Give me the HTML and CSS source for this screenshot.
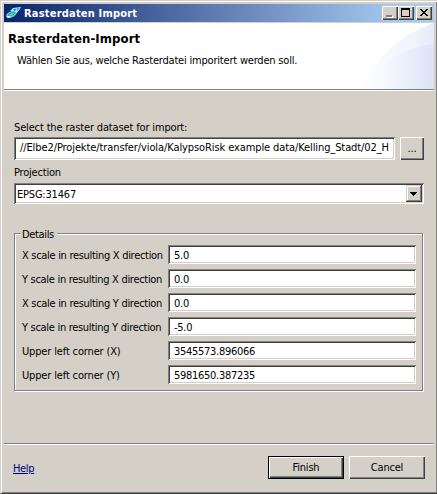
FILE: index.html
```
<!DOCTYPE html>
<html lang="de">
<head>
<meta charset="utf-8">
<title>Rasterdaten Import</title>
<link rel="stylesheet" href="styles.css">
</head>
<body>
<div class="window">
  <div class="titlebar">
    <svg class="app-icon" width="16" height="16" viewBox="0 0 16 16">
      <path d="M4 6L7 3L15 2L14 4L10 9L8 7Z" fill="#b8ecfa"/>
      <path d="M7 4L11 3.5L8.5 6.5Z" fill="#168fd0"/>
      <path d="M11 3L14.5 2.6L11 7Z" fill="#45bce8"/>
      <ellipse cx="5.2" cy="9.5" rx="5.4" ry="3" transform="rotate(-24 5.2 9.5)" fill="#5bcdec"/>
      <ellipse cx="5.3" cy="9.2" rx="3.6" ry="1.7" transform="rotate(-24 5.3 9.2)" fill="#1f96cf"/>
      <path d="M3 10L6 8L8 8.6L5 10.8Z" fill="#a5cf50"/>
      <path d="M0.5 11.5L3 10.8L5 12L2 13Z" fill="#e0ffff"/>
    </svg>
    <span class="caption">Rasterdaten Import</span>
    <div class="controls">
      <span class="control"><svg width="16" height="14"><path d="M4 10H10V12H4Z" fill="#fff" transform="translate(1 0)"/><path d="M4 9H10V11H4Z" fill="#808080"/></svg></span>
      <span class="control"><svg width="16" height="14"><path d="M3 2H12V11H3ZM4 4V10H11V4Z" fill="#000" fill-rule="evenodd"/></svg></span>
      <span class="control close"><svg width="16" height="14" shape-rendering="crispEdges"><path d="M4 3H6V4H7V5H9V4H10V3H12V4H11V5H10V6H9V7H10V8H11V9H12V10H10V9H9V8H7V9H6V10H4V9H5V8H6V7H7V6H6V5H5V4H4Z" fill="#000"/></svg></span>
    </div>
  </div>
  <header class="banner">
    <div class="banner-text">
      <h1>Rasterdaten-Import</h1>
      <p>Wählen Sie aus, welche Rasterdatei imporitert werden soll.</p>
    </div>
    <svg class="swoosh" width="74" height="66" viewBox="0 0 74 66">
      <defs>
        <linearGradient id="a"><stop offset="0" stop-color="#fff"/><stop offset="1" stop-color="#e9eefa"/></linearGradient>
        <linearGradient id="b"><stop offset="0" stop-color="#fff" stop-opacity="0"/><stop offset="1" stop-color="#e4eaf9"/></linearGradient>
        <linearGradient id="c"><stop offset="0" stop-color="#fff"/><stop offset=".3" stop-color="#f7f9fe"/><stop offset="1" stop-color="#dce3f7"/></linearGradient>
      </defs>
      <path d="M0 66Q24 17 74 0V66Z" fill="url(#a)"/>
      <path d="M32 38Q46 10 74 0V66H32Z" fill="url(#b)"/>
      <path d="M2 66Q28 26 74 21V66Z" fill="url(#c)"/>
    </svg>
  </header>
  <main class="content">
    <div class="label source-label">Select the raster dataset for import:</div>
    <div class="file-row">
      <div class="field path"><span>//Elbe2/Projekte/transfer/viola/KalypsoRisk example data/Kelling_Stadt/02_H</span></div>
      <button class="button browse">...</button>
    </div>
    <div class="label projection-label">Projection</div>
    <div class="field combo"><span class="combo-value">EPSG:31467</span><span class="drop"><svg width="16" height="17" shape-rendering="crispEdges"><path d="M4 7H11V8H10V9H9V10H8V11H7V10H6V9H5V8H4Z" fill="#000"/></svg></span></div>
    <fieldset class="details">
      <legend>Details</legend>
      <div class="row"><label>X scale in resulting X direction</label><div class="field value">5.0</div></div>
      <div class="row"><label>Y scale in resulting X direction</label><div class="field value">0.0</div></div>
      <div class="row"><label>X scale in resulting Y direction</label><div class="field value">0.0</div></div>
      <div class="row"><label>Y scale in resulting Y direction</label><div class="field value">-5.0</div></div>
      <div class="row"><label class="corner">Upper left corner (X)</label><div class="field value">3545573.896066</div></div>
      <div class="row"><label class="corner">Upper left corner (Y)</label><div class="field value">5981650.387235</div></div>
    </fieldset>
  </main>
  <footer class="footer">
    <a class="help">Help</a>
    <div class="default-frame"><button class="button finish">Finish</button></div>
    <button class="button cancel">Cancel</button>
  </footer>
</div>
</body>
</html>
```
FILE: styles.css
```
* { box-sizing: border-box; }
body {
  margin: 0;
  overflow: hidden;
  background: #d4d0c8;
  color: #000;
  font: 11px/13px "DejaVu Sans Condensed", "DejaVu Sans", sans-serif;
  font-stretch: condensed;
  letter-spacing: -0.2px;
  white-space: nowrap;
}
svg { display: block; flex: none; }
.window {
  width: 438px;
  height: 494px;
  padding: 2px;
  border: 1px solid;
  border-color: #d4d0c8 #404040 #404040 #d4d0c8;
  box-shadow: inset 1px 1px #fff, inset -1px -1px #808080;
  display: flex;
  flex-direction: column;
}
.window > * { margin-left: 1px; margin-right: 1px; }
.titlebar {
  flex: none;
  height: 18px;
  margin-top: 1px;
  padding: 0 2px;
  display: flex;
  align-items: center;
  background: linear-gradient(90deg, #0a246a, #a6caf0 92%);
  color: #fff;
}
.caption {
  flex: 1;
  margin-left: 2px;
  font-weight: bold;
  letter-spacing: 0.2px;
}
.controls { display: flex; }
.control, .button, .drop {
  background: #d4d0c8;
  border: 0;
  box-shadow: inset 1px 1px #fff, inset -1px -1px #404040, inset -2px -2px #808080;
}
.control { width: 16px; height: 14px; }
.close { margin-left: 2px; }
.banner {
  flex: none;
  height: 68px;
  margin-top: 1px;
  display: flex;
  justify-content: space-between;
  background: #fff;
  border-bottom: 1px solid #fff;
  box-shadow: inset 0 -1px #808080;
}
.banner-text { padding: 8px 0 0 4px; }
h1 { margin: 0; font-size: 13px; line-height: 15px; letter-spacing: 0.1px; }
p { margin: 8px 0 0 9px; }
.content { flex: none; height: 352px; padding: 30px 9px 0 10px; }
.source-label { letter-spacing: -0.15px; }
.file-row { display: flex; gap: 5px; margin-top: 3px; }
.field {
  background: #fff;
  box-shadow: inset 1px 1px #808080, inset -1px -1px #fff, inset 2px 2px #404040, inset -2px -2px #d4d0c8;
}
.path { width: 381px; height: 23px; padding: 4px 6px; letter-spacing: -0.1px; }
.browse { width: 24px; height: 23px; }
.button {
  padding: 0;
  color: #000;
  font: inherit;
  letter-spacing: inherit;
  text-align: center;
}
.projection-label { margin-top: 6px; }
.combo {
  width: 410px;
  height: 21px;
  margin-top: 4px;
  padding: 2px;
  display: flex;
  justify-content: space-between;
}
.combo-value { padding: 3px 0 0 1px; }
.drop { width: 16px; height: 17px; box-shadow: inset -1px -1px #404040, inset 1px 1px #d4d0c8, inset -2px -2px #808080, inset 2px 2px #fff; }
.details {
  width: 409px;
  height: 163px;
  margin: 24px 0 0;
  padding: 6px 6px 0 7px;
  border: 1px solid #808080;
  box-shadow: 1px 1px #fff, inset 1px 1px #fff;
}
legend { height: 11px; padding: 0 3px 0 1px; margin-left: -1px; background: #d4d0c8; letter-spacing: -0.35px; }
.row { display: flex; justify-content: space-between; height: 19px; margin-bottom: 5px; }
.row label { padding-top: 4px; letter-spacing: -0.3px; }
.row .corner { letter-spacing: -0.15px; }
.value { width: 248px; height: 19px; padding: 4px 6px 0; line-height: 13px; letter-spacing: -0.28px; }
.footer {
  flex: 1;
  display: flex;
  padding: 12px 9px 0;
  border-top: 1px solid #808080;
  box-shadow: inset 0 1px #fff;
}
.help { margin: 6px auto 0 0; color: #000080; text-decoration: underline; letter-spacing: -0.35px; }
.default-frame { width: 76px; height: 23px; padding: 1px; background: #000; margin-right: 5px; }
.finish { width: 74px; height: 21px; }
.cancel { width: 76px; height: 23px; }
```
